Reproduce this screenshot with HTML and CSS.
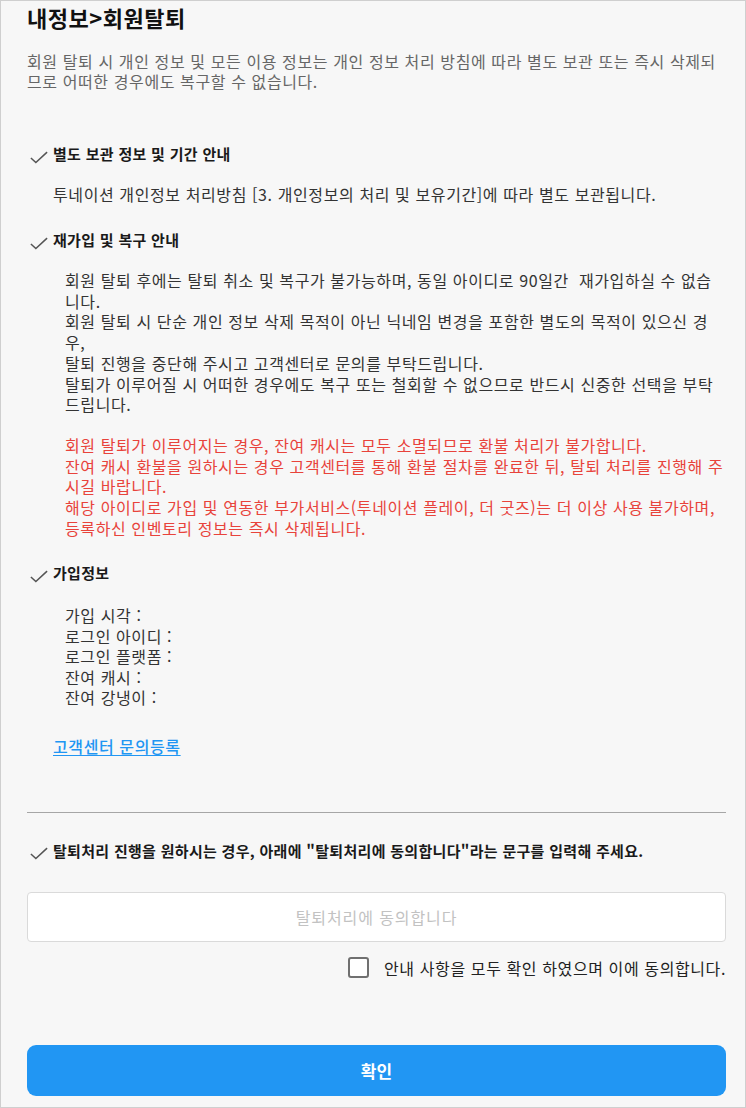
FILE: index.html
```html
<!DOCTYPE html>
<html lang="ko">
<head>
<meta charset="utf-8">
<title>내정보>회원탈퇴</title>
<link rel="stylesheet" href="styles.css">
</head>
<body>
<div class="page">
  <h1 class="title">내정보&gt;회원탈퇴</h1>
  <p class="desc">회원 탈퇴 시 개인 정보 및 모든 이용 정보는 개인 정보 처리 방침에 따라 별도 보관 또는 즉시 삭제되<br>므로 어떠한 경우에도 복구할 수 없습니다.</p>

  <h2 class="heading h-first"><svg class="check" viewBox="0 0 20 14" width="20" height="14"><path d="M1 7.5 L6.5 12.5 L19 1" fill="none" stroke="#555" stroke-width="1.7"/></svg>별도 보관 정보 및 기간 안내</h2>
  <p class="body1">투네이션 개인정보 처리방침 [3. 개인정보의 처리 및 보유기간]에 따라 별도 보관됩니다.</p>

  <h2 class="heading h-second"><svg class="check" viewBox="0 0 20 14" width="20" height="14"><path d="M1 7.5 L6.5 12.5 L19 1" fill="none" stroke="#555" stroke-width="1.7"/></svg>재가입 및 복구 안내</h2>
  <p class="para">회원 탈퇴 후에는 탈퇴 취소 및 복구가 불가능하며, 동일 아이디로 90일간&nbsp; 재가입하실 수 없습<br>니다.<br>회원 탈퇴 시 단순 개인 정보 삭제 목적이 아닌 닉네임 변경을 포함한 별도의 목적이 있으신 경<br>우,<br>탈퇴 진행을 중단해 주시고 고객센터로 문의를 부탁드립니다.<br>탈퇴가 이루어질 시 어떠한 경우에도 복구 또는 철회할 수 없으므로 반드시 신중한 선택을 부탁<br>드립니다.</p>
  <p class="para warn">회원 탈퇴가 이루어지는 경우, 잔여 캐시는 모두 소멸되므로 환불 처리가 불가합니다.<br>잔여 캐시 환불을 원하시는 경우 고객센터를 통해 환불 절차를 완료한 뒤, 탈퇴 처리를 진행해 주<br>시길 바랍니다.<br>해당 아이디로 가입 및 연동한 부가서비스(투네이션 플레이, 더 굿즈)는 더 이상 사용 불가하며,<br>등록하신 인벤토리 정보는 즉시 삭제됩니다.</p>

  <h2 class="heading h-third"><svg class="check" viewBox="0 0 20 14" width="20" height="14"><path d="M1 7.5 L6.5 12.5 L19 1" fill="none" stroke="#555" stroke-width="1.7"/></svg>가입정보</h2>
  <ul class="info">
    <li>가입 시각 :</li>
    <li>로그인 아이디 :</li>
    <li>로그인 플랫폼 :</li>
    <li>잔여 캐시 :</li>
    <li>잔여 강냉이 :</li>
  </ul>
  <a class="link" href="#">고객센터 문의등록</a>

  <hr class="divider">

  <h2 class="heading h-fourth"><svg class="check" viewBox="0 0 20 14" width="20" height="14"><path d="M1 7.5 L6.5 12.5 L19 1" fill="none" stroke="#555" stroke-width="1.7"/></svg>탈퇴처리 진행을 원하시는 경우, 아래에 "탈퇴처리에 동의합니다"라는 문구를 입력해 주세요.</h2>
  <input class="confirm-input" type="text" placeholder="탈퇴처리에 동의합니다">
  <label class="agree"><span class="box"></span><span>안내 사항을 모두 확인 하였으며 이에 동의합니다.</span></label>
  <button class="submit" type="button">확인</button>
</div>
</body>
</html>
```

FILE: styles.css
```css
html, body {
  margin: 0;
  padding: 0;
}
body {
  font-family: "Noto Sans CJK KR", "Noto Sans", sans-serif;
  color: #333;
  background: #fff;
}
.page {
  box-sizing: border-box;
  width: 746px;
  height: 1108px;
  border: 1px solid #cfcfcf;
  background: #f7f7f7;
  padding: 1px 19px 0 26px;
  display: flex;
  flex-direction: column;
}
.title {
  margin: 0;
  font-size: 22px;
  line-height: 30px;
  font-weight: 700;
  letter-spacing: 0.5px;
  color: #111;
}
.desc {
  margin: 19px 0 0;
  font-size: 16px;
  line-height: 20px;
  letter-spacing: 0.6px;
  white-space: nowrap;
  color: #666;
}
.heading {
  margin: 0;
  display: flex;
  align-items: center;
  font-size: 15px;
  line-height: 20px;
  font-weight: 700;
  letter-spacing: 0.3px;
  white-space: nowrap;
  color: #1a1a1a;
}
.check {
  display: block;
  margin: 6px 5px 0 3px;
  width: 18px;
  height: 13px;
  flex: none;
}
.h-first { margin-top: 53px; }
.h-second { margin-top: 26px; }
.h-third { margin-top: 25px; }
.h-fourth { margin-top: 28px; }
.body1 {
  margin: 20px 0 0 26px;
  font-size: 16px;
  line-height: 20px;
  letter-spacing: 0.6px;
  white-space: nowrap;
  color: #333;
}
.para {
  margin: 20px 0 0 38px;
  font-size: 16px;
  line-height: 20.7px;
  letter-spacing: 0.6px;
  white-space: nowrap;
  color: #333;
}
.warn {
  color: #e8433b;
  margin-top: 20px;
}
.info {
  list-style: none;
  margin: 22px 0 0 38px;
  padding: 0;
  font-size: 16px;
  line-height: 20.5px;
  letter-spacing: 0.6px;
  color: #333;
}
.link {
  align-self: flex-start;
  margin: 28px 0 0 26px;
  font-size: 16px;
  line-height: 20px;
  letter-spacing: 0.6px;
  color: #2196f3;
  text-decoration: underline;
  text-underline-offset: 2px;
  font-weight: 500;
}
.divider {
  margin: 56px 0 0;
  border: 0;
  border-top: 1px solid #a6a6a6;
  height: 0;
}
.confirm-input {
  box-sizing: border-box;
  margin: 31px 0 0;
  height: 50px;
  width: 100%;
  border: 1px solid #dadada;
  border-radius: 4px;
  background: #fff;
  font-family: inherit;
  font-size: 16px;
  letter-spacing: 0.9px;
  text-align: center;
  color: #333;
  outline: none;
}
.confirm-input::placeholder {
  color: #c2c2c2;
}
.agree {
  margin-top: 15px;
  align-self: flex-end;
  display: flex;
  align-items: center;
  gap: 15px;
  font-size: 16px;
  line-height: 22px;
  letter-spacing: 0.6px;
  color: #222;
}
.box {
  box-sizing: border-box;
  width: 21px;
  height: 21px;
  border: 2px solid #707070;
  border-radius: 3px;
  background: #fff;
}
.submit {
  margin-top: 66px;
  height: 51px;
  width: 100%;
  border: 0;
  border-radius: 9px;
  background: #2196f3;
  color: #fff;
  font-family: inherit;
  font-size: 17px;
  font-weight: 700;
}
```
